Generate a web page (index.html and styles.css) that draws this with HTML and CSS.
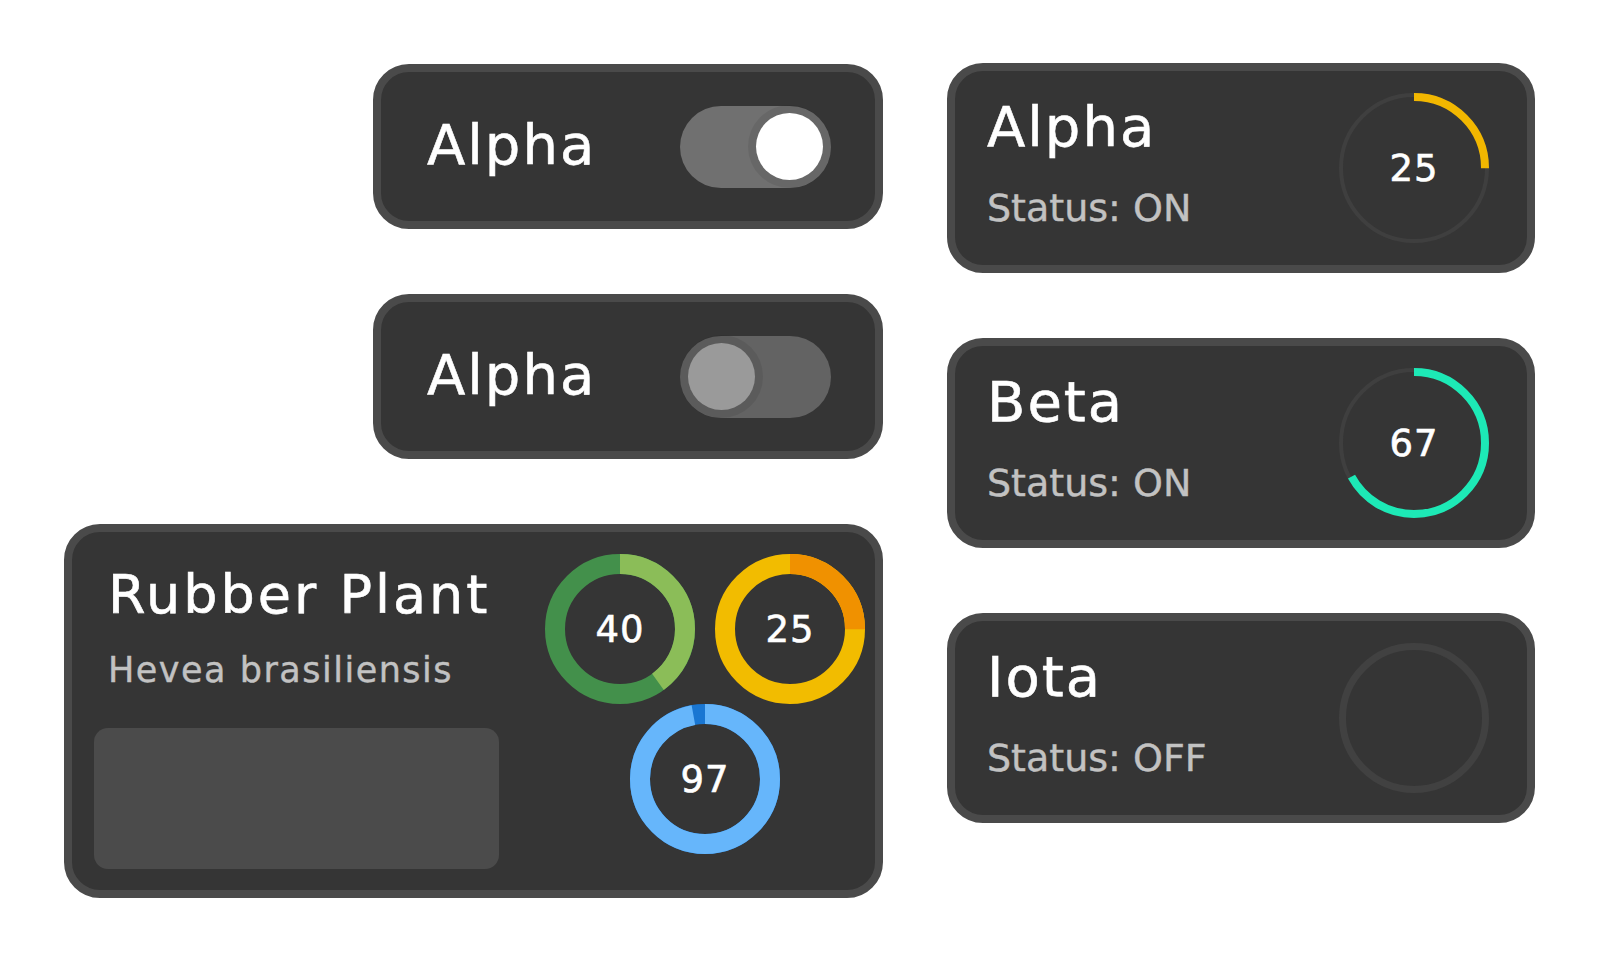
FILE: index.html
```html
<!DOCTYPE html>
<html lang="en">
<head>
<meta charset="utf-8">
<title>Plant dashboard</title>
<link rel="stylesheet" href="styles.css">
</head>
<body>
<div class="page">
  <div class="col-left">
    <div class="card toggle-card">
      <span class="toggle-label">Alpha</span>
      <div class="toggle on"><span class="knob"></span></div>
    </div>
    <div class="card toggle-card">
      <span class="toggle-label">Alpha</span>
      <div class="toggle off"><span class="knob"></span></div>
    </div>
    <div class="card plant-card">
      <div class="plant-info">
        <div class="plant-name">Rubber Plant</div>
        <div class="plant-latin">Hevea brasiliensis</div>
        <div class="plant-photo"></div>
      </div>
      <div class="donuts">
        <div class="donut">
          <svg viewBox="0 0 150 150" width="150" height="150">
            <circle cx="75" cy="75" r="65" fill="none" stroke="#43904b" stroke-width="20"/>
            <circle cx="75" cy="75" r="65" fill="none" stroke="#8bbd58" stroke-width="20" stroke-dasharray="163.4 500" transform="rotate(-90 75 75)"/>
          </svg>
          <span class="donut-value">40</span>
        </div>
        <div class="donut">
          <svg viewBox="0 0 150 150" width="150" height="150">
            <circle cx="75" cy="75" r="65" fill="none" stroke="#f2bc00" stroke-width="20"/>
            <circle cx="75" cy="75" r="65" fill="none" stroke="#f09100" stroke-width="20" stroke-dasharray="102.1 500" transform="rotate(-90 75 75)"/>
          </svg>
          <span class="donut-value">25</span>
        </div>
        <div class="donut">
          <svg viewBox="0 0 150 150" width="150" height="150">
            <circle cx="75" cy="75" r="65" fill="none" stroke="#1976d2" stroke-width="20"/>
            <circle cx="75" cy="75" r="65" fill="none" stroke="#66b6fb" stroke-width="20" stroke-dasharray="396.1 500" transform="rotate(-90 75 75)"/>
          </svg>
          <span class="donut-value">97</span>
        </div>
      </div>
    </div>
  </div>
  <div class="col-right">
    <div class="card status-card">
      <div class="status-text">
        <div class="status-title">Alpha</div>
        <div class="status-line">Status: ON</div>
      </div>
      <div class="gauge">
        <svg viewBox="0 0 150 150" width="150" height="150">
          <circle cx="75" cy="75" r="73" fill="none" stroke="#3f3f3f" stroke-width="4"/>
          <circle cx="75" cy="75" r="71" fill="none" stroke="#f2b700" stroke-width="8" stroke-dasharray="111.5 500" transform="rotate(-90 75 75)"/>
        </svg>
        <span class="gauge-value">25</span>
      </div>
    </div>
    <div class="card status-card">
      <div class="status-text">
        <div class="status-title">Beta</div>
        <div class="status-line">Status: ON</div>
      </div>
      <div class="gauge">
        <svg viewBox="0 0 150 150" width="150" height="150">
          <circle cx="75" cy="75" r="73" fill="none" stroke="#3f3f3f" stroke-width="4"/>
          <circle cx="75" cy="75" r="71" fill="none" stroke="#1de9b6" stroke-width="8" stroke-dasharray="298.9 500" transform="rotate(-90 75 75)"/>
        </svg>
        <span class="gauge-value">67</span>
      </div>
    </div>
    <div class="card status-card">
      <div class="status-text">
        <div class="status-title">Iota</div>
        <div class="status-line">Status: OFF</div>
      </div>
      <div class="gauge">
        <svg viewBox="0 0 150 150" width="150" height="150">
          <circle cx="75" cy="75" r="71.5" fill="none" stroke="#414141" stroke-width="7"/>
        </svg>
      </div>
    </div>
  </div>
</div>
</body>
</html>
```
FILE: styles.css
```css
html, body {
  margin: 0;
  padding: 0;
  background: #ffffff;
}

body {
  font-family: "DejaVu Sans", "Liberation Sans", sans-serif;
  color: #ffffff;
}

.page {
  display: flex;
  gap: 64px;
  padding: 63px 0 0 64px;
}

.col-left {
  width: 819px;
  display: flex;
  flex-direction: column;
  gap: 65px;
  padding-top: 1px;
}

.col-right {
  width: 588px;
  display: flex;
  flex-direction: column;
  gap: 65px;
}

.card {
  box-sizing: border-box;
  background: #353535;
  border: 8px solid #4a4a4a;
  border-radius: 36px;
}

.toggle-label,
.status-title,
.plant-name,
.donut-value,
.gauge-value {
  -webkit-text-stroke: 0.6px currentColor;
}

.status-line,
.plant-latin {
  -webkit-text-stroke: 0.4px currentColor;
}

/* toggle cards */
.toggle-card {
  align-self: flex-end;
  width: 510px;
  height: 165px;
  display: flex;
  align-items: center;
  justify-content: space-between;
  padding: 0 44px 0 46px;
}

.toggle-label {
  font-size: 56px;
  line-height: 56px;
  letter-spacing: 2px;
  padding-bottom: 4px;
}

.toggle {
  box-sizing: border-box;
  width: 151px;
  height: 82px;
  border-radius: 41px;
  padding: 8px;
  display: flex;
  align-items: center;
}

.toggle .knob {
  width: 67px;
  height: 67px;
  border-radius: 50%;
  box-shadow: 0 0 0 8px rgba(0, 0, 0, 0.08);
}

.toggle.on {
  background: #707070;
  justify-content: flex-end;
}

.toggle.on .knob {
  background: #ffffff;
}

.toggle.off {
  background: #636363;
  justify-content: flex-start;
}

.toggle.off .knob {
  background: #9a9a9a;
}

/* plant card */
.plant-card {
  display: flex;
  padding: 22px 10px 21px 22px;
}

.plant-info {
  width: 405px;
  display: flex;
  flex-direction: column;
}

.plant-name {
  font-size: 54px;
  line-height: 54px;
  letter-spacing: 3px;
  margin: 14px 0 0 14px;
  white-space: nowrap;
}

.plant-latin {
  font-size: 35px;
  line-height: 35px;
  letter-spacing: 1.5px;
  color: #c2c2c2;
  margin: 31px 0 0 14px;
}

.plant-photo {
  height: 141px;
  margin-top: 40px;
  border-radius: 14px;
  background: #4b4b4b;
}

.donuts {
  width: 320px;
  margin-left: auto;
  display: flex;
  flex-wrap: wrap;
  justify-content: center;
  column-gap: 20px;
  align-content: flex-start;
}

.donut {
  position: relative;
  width: 150px;
  height: 150px;
}

.donut svg,
.gauge svg {
  display: block;
}

.donut-value,
.gauge-value {
  position: absolute;
  inset: 0;
  display: flex;
  align-items: center;
  justify-content: center;
  font-size: 37px;
  letter-spacing: 1px;
  color: #ffffff;
}

/* status cards */
.status-card {
  width: 588px;
  height: 210px;
  display: flex;
  align-items: center;
  justify-content: space-between;
  padding: 0 38px 0 32px;
}

.status-text {
  display: flex;
  flex-direction: column;
  gap: 34px;
  padding-bottom: 11px;
}

.status-title {
  font-size: 56px;
  line-height: 56px;
  letter-spacing: 2px;
}

.status-line {
  font-size: 38px;
  line-height: 38px;
  color: #c2c2c2;
}

.gauge {
  position: relative;
  width: 150px;
  height: 150px;
}
```
